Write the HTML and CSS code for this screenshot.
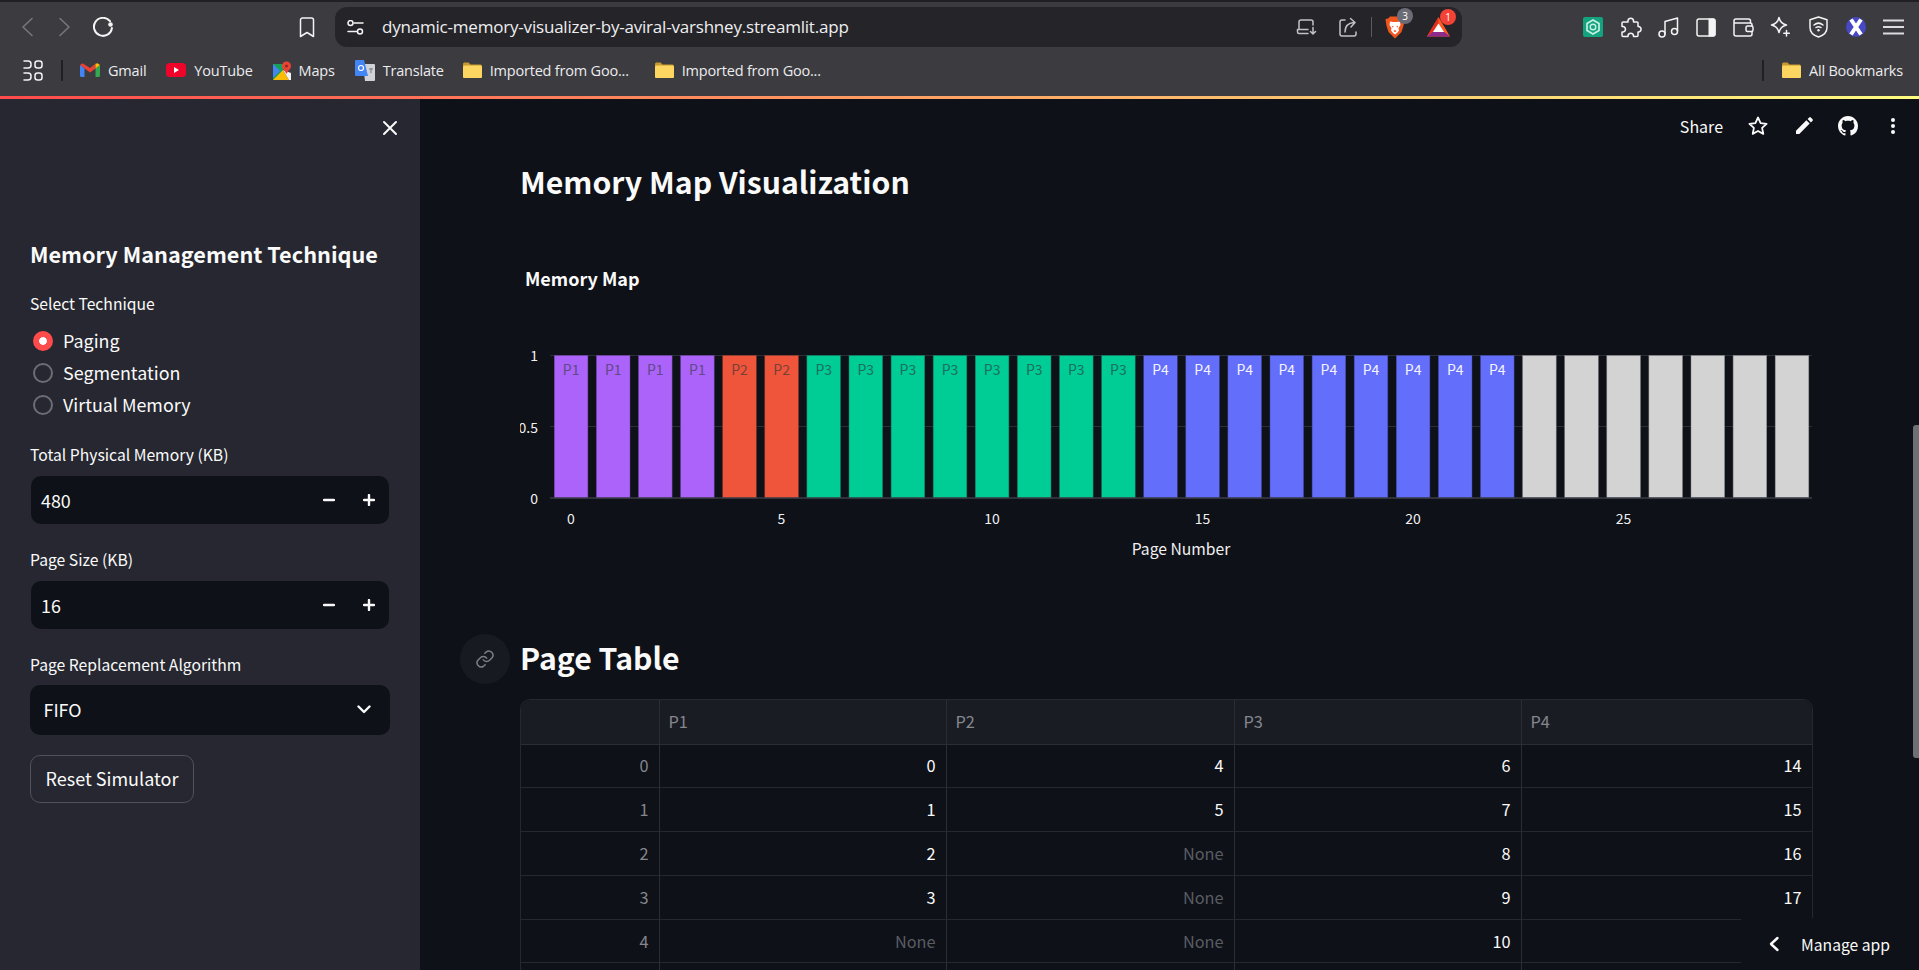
FILE: index.html
```html
<!DOCTYPE html>
<html lang="en">
<head>
<meta charset="utf-8">
<title>Memory Map Visualization</title>
<link rel="stylesheet" href="styles.css">
</head>
<body>
<div class="window">
  <div class="topstrip"></div>
  <div class="toolbar">
    <span class="tbtn"><svg width="14" height="20" viewBox="0 0 14 20"><path d="M12 1.500 3 10l9 8.500" class="ln dim"/></svg></span>
    <span class="tbtn"><svg width="14" height="20" viewBox="0 0 14 20"><path d="M2 1.500 11 10l-9 8.500" class="ln dim"/></svg></span>
    <span class="tbtn reload"><svg width="22" height="20" viewBox="0 0 22 20"><path d="M18 4.200A9 9 0 1 0 19.900 11" class="ln"/><circle cx="18.500" cy="7.500" r="2.300" fill="#f4f4f5"/></svg></span>
    <span class="tbtn bookmark-btn"><svg width="16" height="21" viewBox="0 0 16 21"><path d="M1.500 3a2 2 0 0 1 2-2h9a2 2 0 0 1 2 2v16.500L8 15.500 1.500 19.500z" class="ln thin"/></svg></span>
    <div class="addr">
      <svg width="17" height="15" viewBox="0 0 17 15"><circle cx="3.500" cy="3" r="2.500" class="ln thin"/><path d="M7 3h9M1 11.500h9" class="ln thin"/><circle cx="13" cy="11.500" r="2.500" class="ln thin"/></svg>
      <span class="url">dynamic-memory-visualizer-by-aviral-varshney.streamlit.app</span>
      <div class="addr-right">
        <svg width="22" height="16" viewBox="0 0 22 16"><path d="M3 10V3a2 2 0 0 1 2-2h10a2 2 0 0 1 2 2v3M1.500 10.500V13a1.500 1.500 0 0 0 1.500 1.500H12M1.500 10.500H12M17 8.500V15m-2.500-2.500L17 15l2.500-2.500" class="ln thin dimmer"/></svg>
        <svg class="share" width="20" height="20" viewBox="0 0 20 20"><path d="M6 3H3a2 2 0 0 0-2 2v12a2 2 0 0 0 2 2h12a2 2 0 0 0 2-2v-2M6 15c0-6 3-9 9-9.500M11.500 1.500 16 5.500l-4 4.500" class="ln thin dimmer"/></svg>
        <span class="addr-sep"></span>
        <span class="ext brave">
          <svg width="20" height="23" viewBox="0 0 20 23"><path d="M5 0.500h10l1.800 2 2.700.5-.8 6L16.500 16 10 22.500 3.500 16 1.300 9 .5 3l2.700-.5z" fill="#f1561f"/><path d="M5 5.500 8 6h4l3-.5L15.500 9 13.500 12l.5 2.500-2 2.500-2 1.500L8 17l-2-2.500.5-2.500-2-3z" fill="#fff"/><path d="M6.800 9.500 8.800 10.800 7.500 11.500zM13.200 9.500 11.200 10.800 12.500 11.500zM8.500 15l1.500-1 1.500 1-1.500 1.200z" fill="#f1561f"/></svg>
          <i class="badge grey">3</i>
        </span>
        <span class="ext bat">
          <svg width="23" height="20" viewBox="0 0 23 20"><path d="M11.500 0 23 19.500H0z" fill="#ff5a1f"/><path d="M11.500 0v6.500L5.500 15 0 19.500z" fill="#e32d1e"/><path d="M0 19.500l5.500-4.500h12l5.500 4.500z" fill="#8e2a8c"/><path d="M11.500 6.500 17 15H6z" fill="#fff"/></svg>
          <i class="badge red">1</i>
        </span>
      </div>
    </div>
    <div class="toolbar-right">
      <span class="tbtn2"><svg width="20" height="20" viewBox="0 0 20 20"><rect width="20" height="20" rx="2" fill="#12a37f"/><path d="M10 3l6 3.500v7L10 17l-6-3.500v-7z" fill="none" stroke="#c9efe3" stroke-width="1.700"/><circle cx="10" cy="10" r="2.800" fill="none" stroke="#c9efe3" stroke-width="1.400"/></svg></span>
      <span class="tbtn2"><svg width="22" height="21" viewBox="0 0 22 21"><path d="M8 3.500a2.800 2.800 0 0 1 5.500 0V5h3.500a1 1 0 0 1 1 1v3.500h.800a2.800 2.800 0 0 1 0 5.500H18v3.500a1 1 0 0 1-1 1h-3.500v-1a2.800 2.800 0 0 0-5.500 0v1H3a1 1 0 0 1-1-1V15h1.200a2.800 2.800 0 0 0 0-5.500H2V6a1 1 0 0 1 1-1h5z" class="ln thin"/></svg></span>
      <span class="tbtn2"><svg width="21" height="21" viewBox="0 0 21 21"><path d="M7 17V4.500L19.500 1v13" class="ln thin"/><circle cx="4" cy="17" r="3" class="ln thin"/><circle cx="16.500" cy="14.500" r="3" class="ln thin"/></svg></span>
      <span class="tbtn2"><svg width="20" height="19" viewBox="0 0 20 19"><rect x="1" y="1" width="18" height="17" rx="2" class="ln thin"/><path d="M12.500 .5H17.500a2 2 0 0 1 2 2v14a2 2 0 0 1-2 2h-5z" fill="#f4f4f5"/></svg></span>
      <span class="tbtn2"><svg width="21" height="19" viewBox="0 0 21 19"><path d="M17.500 5V3a2 2 0 0 0-2-2H3a2 2 0 0 0-2 2v13a2 2 0 0 0 2 2h14a2 2 0 0 0 2-2v-2.500M1 4.500a1 1 0 0 0 1 .5h15a2 2 0 0 1 2 2v1" class="ln thin"/><rect x="13" y="8" width="7" height="5.500" rx="1.500" class="ln thin"/></svg></span>
      <span class="tbtn2"><svg width="21" height="22" viewBox="0 0 21 22"><path d="M9 1.500c1 4.500 3 6.500 7.500 7.500-4.500 1-6.500 3-7.500 7.500C8 12 6 10 1.500 9 6 8 8 6 9 1.500z" class="ln thin"/><path d="M16.500 14.500v5.500M13.800 17.200h5.500" class="ln thin"/></svg></span>
      <span class="tbtn2"><svg width="19" height="22" viewBox="0 0 19 22"><path d="M9.500 1 18 3.800v7.700c0 4.500-3.500 8-8.500 9.500C4.500 19.500 1 16 1 11.500V3.800z" class="ln thin"/><path d="M5 9c3-2.500 6-2.500 9 0M7 11.500c1.500-1 3.500-1 5 0" class="ln thin"/><circle cx="9.500" cy="14.300" r="1.200" fill="#f4f4f5"/></svg></span>
      <span class="tbtn2"><svg width="20" height="20" viewBox="0 0 20 20"><circle cx="10" cy="10" r="10" fill="#4648c4"/><path d="M5 2.500 15 17.500M15 2.500 5 17.500" stroke="#fff" stroke-width="4" fill="none"/></svg></span>
      <span class="tbtn2"><svg width="21" height="16" viewBox="0 0 21 16"><path d="M0 1.500h21M0 8h21M0 14.500h21" class="ln bars-menu"/></svg></span>
    </div>
  </div>
  <div class="bookmarks">
    <svg class="apps" width="20" height="21" viewBox="0 0 20 21"><path d="M1 1h4a3 3 0 0 1 3 3v1a3 3 0 0 1-3 3H1M1 13h4a3 3 0 0 1 3 3v1a3 3 0 0 1-3 3H1" class="ln thin"/><rect x="12" y="1" width="7" height="7" rx="2.500" class="ln thin"/><rect x="12" y="13" width="7" height="7" rx="2.500" class="ln thin"/></svg>
    <span class="bm-sep"></span>
    <span class="bm first"><svg width="20" height="14" viewBox="0 0 20 14"><path d="M0 2v10.500A1.500 1.500 0 0 0 1.500 14H4.500V5.500z" fill="#4285f4"/><path d="M15.500 14h3a1.500 1.500 0 0 0 1.500-1.500V2l-4.500 3.500z" fill="#34a853"/><path d="M0 2 10 9.500 15.500 5.500V.8L10 5 2.500.3z" fill="#ea4335"/><path d="M15.500 .8 17.500.3 20 2l-4.500 3.500z" fill="#fbbc04"/></svg>Gmail</span>
    <span class="bm"><svg width="20" height="14" viewBox="0 0 20 14"><rect width="20" height="14" rx="3.500" fill="#f0052a"/><path d="M8 4l5 3-5 3z" fill="#fff"/></svg>YouTube</span>
    <span class="bm"><svg width="18" height="19" viewBox="0 0 18 19"><path d="M0 3h10v16H0z" fill="#1a9e5c"/><path d="M0 19 10 9l6 10z" fill="#fbbc04"/><path d="M0 3l7 7-7 7z" fill="#4285f4"/><path d="M10 9l6 10h2V12z" fill="#f3f4f5"/><circle cx="13.500" cy="5" r="4.500" fill="#ea4335"/><path d="M10 7l3.500 6L17 7z" fill="#ea4335"/><circle cx="13.500" cy="5" r="1.500" fill="#8f2a20"/></svg>Maps</span>
    <span class="bm"><svg width="20" height="21" viewBox="0 0 20 21"><path d="M8 4h11a1 1 0 0 1 1 1v15a1 1 0 0 1-1 1H10z" fill="#cfd2d6"/><path d="M1 0h8l4 16H1a1 1 0 0 1-1-1V1a1 1 0 0 1 1-1z" fill="#4285f4"/><circle cx="6" cy="8" r="2.500" fill="none" stroke="#fff" stroke-width="1.200"/><path d="M14 9h4M16 8v5" stroke="#7a7d82" stroke-width="1" fill="none"/></svg>Translate</span>
    <span class="bm bm-folder"><svg width="19" height="16" viewBox="0 0 19 16"><use href="#folder"/></svg>Imported from Goo...</span>
    <span class="bm bm-folder"><svg width="19" height="16" viewBox="0 0 19 16"><use href="#folder"/></svg>Imported from Goo...</span>
    <span class="bm-sep right"></span>
    <span class="bm bm-folder last"><svg width="19" height="16" viewBox="0 0 19 16"><use href="#folder"/></svg>All Bookmarks</span>
  </div>
  <svg class="defs" width="0" height="0"><defs><g id="folder"><path d="M0 2a1.500 1.500 0 0 1 1.500-1.500h4L7.500 2.500H17.500A1.500 1.500 0 0 1 19 4v10.500a1.500 1.500 0 0 1-1.500 1.500h-16A1.500 1.500 0 0 1 0 14.500z" fill="#c89a2e"/><rect y="3.500" width="19" height="12.500" rx="1.500" fill="#fcd661"/></g></defs></svg>
  <div class="decoration"></div>

  <div class="app">
    <aside class="sidebar">
      <div class="side-close"><svg width="16" height="16" viewBox="0 0 16 16"><path d="M2 2l12 12M14 2 2 14" class="ln thick"/></svg></div>
      <h3 class="side-title">Memory Management Technique</h3>
      <div class="label first-label">Select Technique</div>
      <div class="radios">
        <div class="radio"><span class="dot on"></span>Paging</div>
        <div class="radio"><span class="dot"></span>Segmentation</div>
        <div class="radio"><span class="dot"></span>Virtual Memory</div>
      </div>
      <div class="label field-label">Total Physical Memory (KB)</div>
      <div class="num">
        <span class="num-val">480</span>
        <span class="step"><svg width="12" height="12" viewBox="0 0 12 12"><path d="M1 6h10" class="ln bold"/></svg></span>
        <span class="step"><svg width="12" height="12" viewBox="0 0 12 12"><path d="M1 6h10M6 1v10" class="ln bold"/></svg></span>
      </div>
      <div class="label field-label">Page Size (KB)</div>
      <div class="num">
        <span class="num-val">16</span>
        <span class="step"><svg width="12" height="12" viewBox="0 0 12 12"><path d="M1 6h10" class="ln bold"/></svg></span>
        <span class="step"><svg width="12" height="12" viewBox="0 0 12 12"><path d="M1 6h10M6 1v10" class="ln bold"/></svg></span>
      </div>
      <div class="label field-label">Page Replacement Algorithm</div>
      <div class="select">FIFO<svg width="14" height="9" viewBox="0 0 14 9"><path d="M1.500 1.500 7 7l5.500-5.500" class="ln bold"/></svg></div>
      <button class="reset">Reset Simulator</button>
    </aside>

    <main class="main">
      <div class="actions">
        <span class="share-txt">Share</span>
        <svg class="a-star" width="20" height="20" viewBox="0 0 20 20"><path d="M10 1.500l2.600 5.600 6 .7-4.500 4.100 1.200 6L10 15l-5.300 2.900 1.200-6L1.400 7.800l6-.7z" class="ln thin2"/></svg>
        <svg class="a-pen" width="17" height="17" viewBox="0 0 18 18"><path d="M0 18v-3.500L11 3.500 14.500 7 3.500 18zM12.300 2.200 14 .5a1.200 1.200 0 0 1 1.700 0l1.800 1.800a1.200 1.200 0 0 1 0 1.700L15.800 5.700z" fill="#fafafa"/></svg>
        <svg class="a-gh" width="20" height="20" viewBox="0 0 16 16"><path fill="#fafafa" d="M8 0C3.580 0 0 3.580 0 8c0 3.540 2.290 6.530 5.470 7.590.4.070.55-.17.550-.38 0-.19-.01-.82-.01-1.490-2.010.37-2.530-.49-2.690-.94-.09-.23-.48-.94-.82-1.130-.28-.15-.68-.52-.01-.53.630-.01 1.080.58 1.230.82.720 1.210 1.870.87 2.330.66.070-.52.280-.87.510-1.070-1.780-.2-3.640-.89-3.640-3.950 0-.87.310-1.590.820-2.150-.08-.2-.36-1.020.08-2.120 0 0 .67-.21 2.200.82.640-.18 1.320-.27 2-.27s1.360.09 2 .27c1.530-1.040 2.200-.82 2.200-.82.440 1.100.160 1.920.08 2.120.51.560.82 1.270.82 2.150 0 3.070-1.870 3.750-3.650 3.950.29.250.54.730.54 1.480 0 1.070-.01 1.930-.01 2.200 0 .21.150.46.550.38A8.013 8.013 0 0 0 16 8c0-4.420-3.580-8-8-8z"/></svg>
        <svg class="a-menu" width="6" height="18" viewBox="0 0 6 18"><circle cx="3" cy="3" r="2" fill="#fafafa"/><circle cx="3" cy="9" r="2" fill="#fafafa"/><circle cx="3" cy="15" r="2" fill="#fafafa"/></svg>
      </div>
      <h2 class="page-title">Memory Map Visualization</h2>

      <svg class="chart" width="1292" height="340" viewBox="0 0 1292 340">
        <text x="5" y="35.500" class="c-title">Memory Map</text>
        <path class="grid" d="M30 105.500H1292M30 176.500H1292"/>
        <text x="18" y="111" class="tick end">1</text>
        <text x="18" y="182.500" class="tick end">0.5</text>
        <text x="18" y="254" class="tick end">0</text>
        <g class="bars">
          <rect class="p1" x="34.300" y="105.500" width="33.600" height="142.500"/><rect class="p1" x="76.400" y="105.500" width="33.600" height="142.500"/><rect class="p1" x="118.500" y="105.500" width="33.600" height="142.500"/><rect class="p1" x="160.600" y="105.500" width="33.600" height="142.500"/>
          <rect class="p2" x="202.700" y="105.500" width="33.600" height="142.500"/><rect class="p2" x="244.800" y="105.500" width="33.600" height="142.500"/>
          <rect class="p3" x="286.900" y="105.500" width="33.600" height="142.500"/><rect class="p3" x="329" y="105.500" width="33.600" height="142.500"/><rect class="p3" x="371.100" y="105.500" width="33.600" height="142.500"/><rect class="p3" x="413.200" y="105.500" width="33.600" height="142.500"/><rect class="p3" x="455.300" y="105.500" width="33.600" height="142.500"/><rect class="p3" x="497.400" y="105.500" width="33.600" height="142.500"/><rect class="p3" x="539.500" y="105.500" width="33.600" height="142.500"/><rect class="p3" x="581.600" y="105.500" width="33.600" height="142.500"/>
          <rect class="p4" x="623.700" y="105.500" width="33.600" height="142.500"/><rect class="p4" x="665.800" y="105.500" width="33.600" height="142.500"/><rect class="p4" x="707.900" y="105.500" width="33.600" height="142.500"/><rect class="p4" x="750" y="105.500" width="33.600" height="142.500"/><rect class="p4" x="792.100" y="105.500" width="33.600" height="142.500"/><rect class="p4" x="834.200" y="105.500" width="33.600" height="142.500"/><rect class="p4" x="876.300" y="105.500" width="33.600" height="142.500"/><rect class="p4" x="918.400" y="105.500" width="33.600" height="142.500"/><rect class="p4" x="960.500" y="105.500" width="33.600" height="142.500"/>
          <rect class="free" x="1002.600" y="105.500" width="33.600" height="142.500"/><rect class="free" x="1044.700" y="105.500" width="33.600" height="142.500"/><rect class="free" x="1086.800" y="105.500" width="33.600" height="142.500"/><rect class="free" x="1128.900" y="105.500" width="33.600" height="142.500"/><rect class="free" x="1171" y="105.500" width="33.600" height="142.500"/><rect class="free" x="1213.100" y="105.500" width="33.600" height="142.500"/><rect class="free" x="1255.200" y="105.500" width="33.600" height="142.500"/>
        </g>
        <path class="zero" d="M30 248H1292"/>
        <g class="bar-labels">
          <text x="51.100" y="124.500">P1</text><text x="93.200" y="124.500">P1</text><text x="135.300" y="124.500">P1</text><text x="177.400" y="124.500">P1</text>
          <text x="219.500" y="124.500" class="on-red">P2</text><text x="261.600" y="124.500" class="on-red">P2</text>
          <text x="303.700" y="124.500" class="on-green">P3</text><text x="345.800" y="124.500" class="on-green">P3</text><text x="387.900" y="124.500" class="on-green">P3</text><text x="430" y="124.500" class="on-green">P3</text><text x="472.100" y="124.500" class="on-green">P3</text><text x="514.200" y="124.500" class="on-green">P3</text><text x="556.300" y="124.500" class="on-green">P3</text><text x="598.400" y="124.500" class="on-green">P3</text>
          <text x="640.500" y="124.500" class="on-blue">P4</text><text x="682.600" y="124.500" class="on-blue">P4</text><text x="724.700" y="124.500" class="on-blue">P4</text><text x="766.800" y="124.500" class="on-blue">P4</text><text x="808.900" y="124.500" class="on-blue">P4</text><text x="851" y="124.500" class="on-blue">P4</text><text x="893.100" y="124.500" class="on-blue">P4</text><text x="935.200" y="124.500" class="on-blue">P4</text><text x="977.300" y="124.500" class="on-blue">P4</text>
        </g>
        <g class="xticks">
          <text x="51" y="274">0</text><text x="261.500" y="274">5</text><text x="472" y="274">10</text><text x="682.500" y="274">15</text><text x="893" y="274">20</text><text x="1103.500" y="274">25</text>
        </g>
        <text x="661" y="305" class="x-title">Page Number</text>
      </svg>

      <h2 class="section-title">
        <span class="anchor"><svg width="20" height="20" viewBox="0 0 24 24"><path d="M10 13a5 5 0 0 0 7.500.5l3-3a5 5 0 0 0-7-7l-1.700 1.700M14 11a5 5 0 0 0-7.500-.5l-3 3a5 5 0 0 0 7 7l1.700-1.700" class="ln link"/></svg></span>
        Page Table
      </h2>

      <table class="df">
        <colgroup><col class="c-idx"><col class="c-a"><col class="c-b"><col class="c-a"><col class="c-d"></colgroup>
        <thead><tr><th></th><th>P1</th><th>P2</th><th>P3</th><th>P4</th></tr></thead>
        <tbody>
          <tr><td class="idx">0</td><td>0</td><td>4</td><td>6</td><td>14</td></tr>
          <tr><td class="idx">1</td><td>1</td><td>5</td><td>7</td><td>15</td></tr>
          <tr><td class="idx">2</td><td>2</td><td class="none">None</td><td>8</td><td>16</td></tr>
          <tr><td class="idx">3</td><td>3</td><td class="none">None</td><td>9</td><td>17</td></tr>
          <tr><td class="idx">4</td><td class="none">None</td><td class="none">None</td><td>10</td><td></td></tr>
          <tr><td></td><td></td><td></td><td></td><td></td></tr>
        </tbody>
      </table>

      <div class="scrollbar"></div>
      <div class="manage"><svg width="12" height="16" viewBox="0 0 12 16"><path d="M9.500 2 3 8l6.500 6" class="ln bold"/></svg><span>Manage app</span></div>
    </main>
  </div>
</div>
</body>
</html>
```
FILE: styles.css
```css
* { box-sizing: border-box; }
html, body { margin: 0; height: 100%; background: #0e1117; overflow: hidden; }
.window { width: 1919px; height: 970px; display: flex; flex-direction: column; overflow: hidden; font-family: "Noto Sans CJK SC", "Noto Sans", sans-serif; color: #fafafa; }

.ln { fill: none; stroke: #f4f4f5; stroke-width: 2; stroke-linecap: round; stroke-linejoin: round; }
.ln.thin { stroke-width: 1.500; }
.ln.thin2 { stroke: #fafafa; stroke-width: 1.800; }
.ln.dim { stroke: #77777c; stroke-width: 1.600; }
.ln.dimmer { stroke: #c2c2c6; }
.ln.bold { stroke: #fafafa; stroke-width: 2.400; }
.ln.thick { stroke: #fafafa; stroke-width: 2; }
.ln.link { stroke: #7d7f85; stroke-width: 1.800; }
.ln.bars-menu { stroke: #dcdcde; stroke-width: 2; }

.topstrip { height: 2px; background: #202024; flex: none; }
.toolbar { height: 47px; flex: none; background: #3b3b40; display: flex; align-items: flex-start; padding: 5px 7px 0 7.500px; }
.tbtn { width: 38px; height: 40px; display: flex; align-items: center; justify-content: center; flex: none; }
.bookmark-btn { margin-left: 166px; }
.addr { width: 1127px; height: 40px; margin-left: 9.500px; background: #252529; border-radius: 12px; display: flex; align-items: center; padding-left: 12px; flex: none; }
.url { margin-left: 18px; padding-bottom: 1px; font-family: "Open Sans", sans-serif; font-size: 17px; color: #eeeef0; letter-spacing: -.2px; white-space: nowrap; }
.addr-right { margin-left: auto; display: flex; align-items: center; padding-right: 12px; }
.share { margin-left: 21px; }
.addr-sep { width: 1px; height: 20px; background: #5a5a60; margin: 0 13px 0 12px; }
.ext { position: relative; display: flex; }
.bat { margin-left: 22px; }
.badge { position: absolute; top: -8px; right: -8px; width: 16px; height: 16px; border-radius: 50%; font: normal 10px/16px "Open Sans", sans-serif; text-align: center; color: #fff; }
.badge.grey { background: #6b6c75; }
.badge.red { background: #f44336; right: -6px; }
.toolbar-right { margin-left: auto; display: flex; }
.tbtn2 { width: 37.500px; height: 40px; display: flex; align-items: center; justify-content: center; }

.bookmarks { height: 47px; flex: none; background: #3b3b40; display: flex; align-items: center; padding: 0 16px 5px 23px; font-family: "Open Sans", sans-serif; font-size: 14.500px; color: #ececee; white-space: nowrap; }
.bm-sep { width: 2px; height: 21px; background: #202024; margin-left: 18px; }
.bm-sep.right { margin-left: auto; }
.bm { display: flex; align-items: center; gap: 8px; margin-left: 20px; letter-spacing: -.2px; }
.bm.first { margin-left: 17px; }
.bm-folder { margin-left: 19px; }
.bm-folder + .bm-folder { margin-left: 26px; }
.bm.last { margin-left: 18px; }
.defs { position: absolute; }

.decoration { height: 3px; flex: none; background: linear-gradient(90deg, #ff4b4b, #fffd80); }

.app { flex: 1; min-height: 0; display: flex; }
.sidebar { width: 420px; flex: none; background: #262730; padding-left: 30px; }
.side-close { height: 58px; display: flex; align-items: center; justify-content: flex-end; padding-right: 22px; }
.side-title { margin: 78.500px 0 0; font-size: 21.700px; line-height: 36px; font-weight: 600; white-space: nowrap; }
.label { height: 20px; font-size: 15.700px; line-height: 19px; white-space: nowrap; }
.first-label { margin-top: 22.500px; }
.field-label { margin-top: 24px; }
.radios { margin-top: 11px; }
.radio { height: 32px; padding-bottom: 2px; display: flex; align-items: center; gap: 10px; font-size: 17.900px; line-height: 30px; }
.dot { width: 20px; height: 20px; margin: 2px 0 0 3px; border-radius: 50%; border: 2px solid #6c6d75; flex: none; }
.dot.on { background: #ff4b4b; border: 6.500px solid #ff4b4b; background-clip: padding-box; box-shadow: inset 0 0 0 4px #fff; }
.num { width: 358px; height: 48px; margin: 11px 0 0 1px; background: #0e1117; border-radius: 10px; display: flex; align-items: center; padding: 0 14px 0 10px; font-size: 17.900px; }
.num + .label { margin-top: 26px; }
.num-val { flex: 1; padding-bottom: 1px; }
.step { width: 40px; display: flex; justify-content: center; }
.step:last-child { margin-right: -14px; }
.select { width: 360px; height: 50px; margin-top: 10px; background: #0e1117; border-radius: 10px; display: flex; align-items: center; justify-content: space-between; padding: 0 19px 2px 13.500px; font-size: 17.900px; }
.reset { display: block; width: 164px; height: 48px; margin-top: 20px; background: #262730; border: 1px solid #50515a; border-radius: 10px; color: #fafafa; font: 18px/1 "Noto Sans CJK SC", sans-serif; padding: 0 0 2px; white-space: nowrap; }

.main { flex: 1; min-width: 0; position: relative; background: #0e1117; padding-left: 100px; overflow: hidden; }
.actions { height: 54px; display: flex; align-items: center; justify-content: flex-end; padding-right: 23px; padding-bottom: 1px; }
.share-txt { font-size: 16px; }
.a-star { margin-left: 25px; }
.a-pen { margin-left: 28px; }
.a-gh { margin-left: 25px; }
.a-menu { margin-left: 32px; }
.page-title { margin: 8px 0 0; font-size: 30.200px; line-height: 40px; font-weight: 600; white-space: nowrap; }
.chart { display: block; margin-top: 49px; }
.chart text { font-family: "Noto Sans CJK SC", sans-serif; }
.c-title { font-size: 18px; font-weight: 700; fill: #fafafa; }
.tick, .xticks text { font-size: 14px; fill: #f0f0f2; }
.end { text-anchor: end; }
.xticks text, .bar-labels text, .x-title { text-anchor: middle; }
.x-title { font-size: 15.700px; fill: #f0f0f2; }
.grid { stroke: #2c2e36; stroke-width: 1; fill: none; }
.zero { stroke: #3b3d47; stroke-width: 1.600; fill: none; }
.bars rect { stroke-width: .6; stroke-opacity: .8; }
.p1 { fill: #ab63fa; stroke: #6d45a0; }
.p2 { fill: #ef553b; stroke: #93402f; }
.p3 { fill: #00cc96; stroke: #0b7d60; }
.p4 { fill: #636efa; stroke: #3f46a0; }
.free { fill: #d3d3d3; stroke: #86878a; }
.bar-labels text { font-size: 14px; fill: #5f4a85; }
.bar-labels .on-red { fill: #7a4038; }
.bar-labels .on-green { fill: #1d6f5c; }
.bar-labels .on-blue { fill: #f4f4ff; }

.section-title { position: relative; margin: 41.500px 0 0; font-size: 30.200px; line-height: 50px; font-weight: 600; white-space: nowrap; }
.anchor { position: absolute; left: -60px; top: 2px; width: 50px; height: 50px; border-radius: 50%; background: #171a21; display: flex; align-items: center; justify-content: center; }
.df { margin-top: 17px; width: 1292.500px; table-layout: fixed; border-collapse: separate; border-spacing: 0; border: 1px solid #262830; border-radius: 10px 10px 0 0; font-size: 16.300px; }
.c-idx { width: 137.500px; }
.c-a { width: 287px; }
.c-b { width: 288px; }
.c-d { width: 291px; }
.df th { height: 45px; padding: 0 9px 1px; background: #1a1c24; font-weight: 400; text-align: left; color: #85878d; border-bottom: 1px solid #2b2d35; border-left: 1px solid #2b2d35; }
.df th:first-child { border-left: 0; border-top-left-radius: 10px; }
.df th:last-child { border-top-right-radius: 10px; }
.df td { height: 43.800px; padding: 0 10px 1px; text-align: right; color: #fafafa; border-bottom: 1px solid #262830; border-left: 1px solid #2b2d35; }
.df td:first-child { border-left: 0; }
.df td.idx { color: #85878d; }
.df td.none { color: #5a5c63; }

.scrollbar { position: absolute; right: 0; top: 326px; width: 6px; height: 333px; background: #6f7075; border-radius: 3px 0 0 3px; }
.manage { position: absolute; right: 0; bottom: 0; width: 178px; height: 52px; background: #0e1117; display: flex; align-items: center; padding-left: 27px; gap: 21px; font-size: 15.700px; }
```
